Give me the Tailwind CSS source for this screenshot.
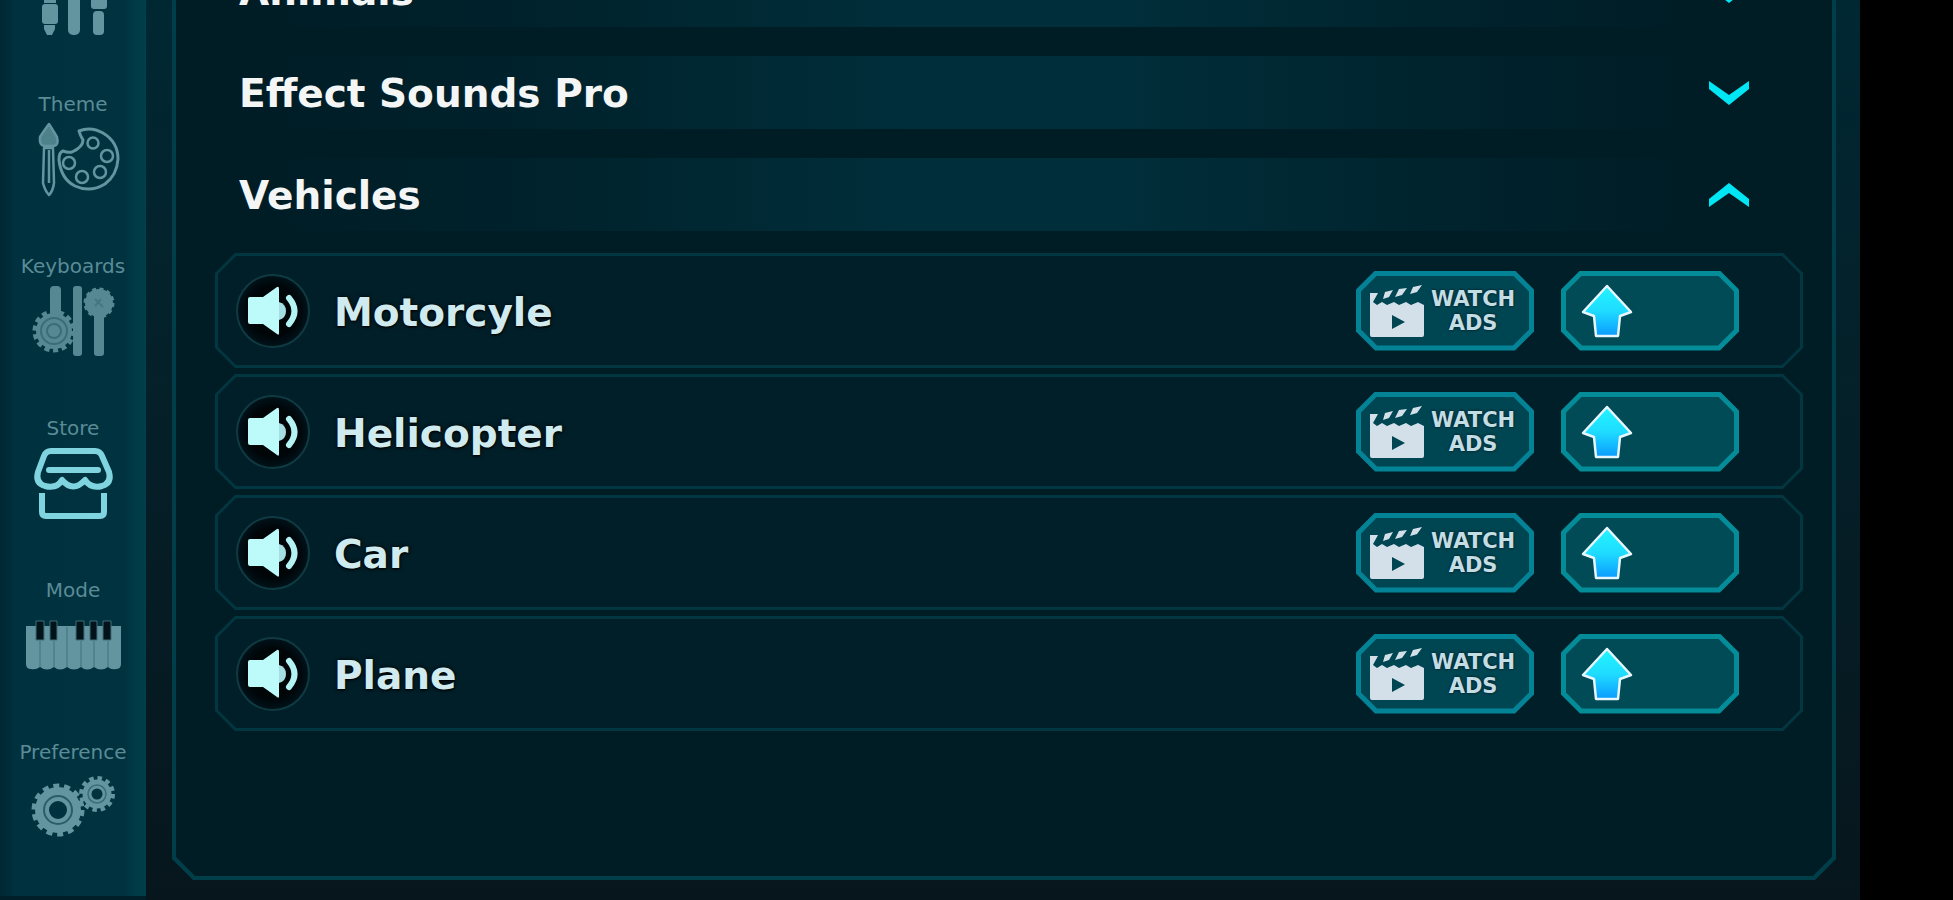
<!DOCTYPE html>
<html lang="en">
<head>
  <meta charset="UTF-8" />
  <meta name="viewport" content="width=device-width, initial-scale=1.0"/>
  <title>Sound Store</title>
  <script src="https://cdn.jsdelivr.net/npm/@tailwindcss/browser@4"></script>
</head>
<body class="bg-black min-h-screen flex pr-[93px] font-['DejaVu_Sans',sans-serif]">

  <!-- Shared icons -->
  <svg class="absolute size-0" xmlns="http://www.w3.org/2000/svg" aria-hidden="true">
    <defs>
      <linearGradient id="arrowFill" x1="0" y1="0" x2="0" y2="1">
        <stop offset="0" stop-color="#22f4ff"/>
        <stop offset="0.5" stop-color="#1fdcff"/>
        <stop offset="1" stop-color="#0a9bff"/>
      </linearGradient>
    </defs>
    <symbol id="speaker" viewBox="0 0 50 50">
      <path d="M2 11H15L29 1Q31 0 31 3V47Q31 50 29 48L15 38H2Q0 38 0 36V13Q0 11 2 11Z" fill="#bdfbfb"/>
      <path d="M31 16Q38 18 38 25Q38 32 31 34Z" fill="#a5dfe2"/>
      <path d="M41 12Q52 25 41 38" fill="none" stroke="#b4f3f4" stroke-width="6" stroke-linecap="round"/>
    </symbol>
    <symbol id="clapper" viewBox="0 0 54 52">
      <path fill="#d3e0ea" fill-rule="evenodd" d="M0 8L8 8L3 17L7 20L12 17L17 20L24 17L29 20L36 17L41 20L48 17L54 20V50Q54 52 52 52H2Q0 52 0 50ZM22 30V44L35 37Z"/>
      <path fill="#d3e0ea" d="M15 7L23 5L19 12L13 14ZM29 4L37 3L32 10L25 12ZM43 2L52 0L47 7L40 9Z"/>
    </symbol>
    <symbol id="arrow" viewBox="0 0 52 54">
      <path d="M26 2L50 28L39 32L37 52H15L13 32L2 28Z" fill="url(#arrowFill)" stroke="#e6f6ff" stroke-width="2.5" stroke-linejoin="round"/>
    </symbol>
    <symbol id="chevron" viewBox="0 0 40 24">
      <path d="M0 0L20 14L40 0V8L20 24L0 8Z" fill="#00e6f5"/>
    </symbol>
  </svg>

  <!-- Sidebar -->
  <nav class="w-[146px] shrink-0 flex flex-col items-center gap-[56px] border-b-4 border-[#001f29] bg-[linear-gradient(90deg,#002733_0,#002c38_9px,#00313e_14px,#00323f_125px,#003945_132px,#003f4b_100%)] text-xl leading-6 text-[#5b8b96]">
    <a href="#" aria-label="Mixer">
      <svg class="block w-[100px] h-9" viewBox="0 0 100 36" fill="#62959f">
        <rect x="21" y="0" width="12" height="3"/>
        <rect x="19" y="4" width="16" height="20" rx="3"/>
        <path d="M21 25H32V29L29 35H24L21 29Z"/>
        <rect x="45" y="-6" width="12" height="41" rx="5"/>
        <rect x="68" y="-6" width="16" height="15" rx="3"/>
        <rect x="70" y="11" width="11" height="24" rx="4"/>
      </svg>
    </a>
    <a href="#" class="flex flex-col items-center gap-[5px]">
      <span>Theme</span>
      <svg class="w-[100px] h-[77px]" viewBox="0 0 100 77" fill="none" stroke="#62959f" stroke-width="2.5" stroke-linejoin="round">
        <path d="M26 3Q20 11 17 16Q16 24 21 25H31Q36 24 34 16Q31 11 26 3Z" fill="#4d818c"/>
        <path d="M21 27L20 62Q22 70 26 74Q30 70 31 62L30 27ZM26 29V62" stroke-width="2.5"/>
        <path d="M56 10Q68 5 80 12Q95 21 95 38Q94 54 82 63Q67 72 52 65Q38 58 36 39Q36 31 40 30Q45 32 49 31Q60 26 60 19Q57 14 56 10Z" stroke-width="3"/>
        <circle cx="70" cy="22" r="5.5"/>
        <circle cx="84" cy="35" r="6"/>
        <circle cx="77" cy="51" r="6"/>
        <circle cx="59" cy="56" r="6"/>
        <circle cx="46" cy="42" r="6"/>
      </svg>
    </a>
    <a href="#" class="flex flex-col items-center gap-[5px]">
      <span>Keyboards</span>
      <svg class="w-[100px] h-[77px]" viewBox="0 0 100 77" fill="#568893">
        <rect x="27" y="3" width="11" height="30" rx="4"/>
        <rect x="50" y="3" width="9" height="70" rx="3"/>
        <rect x="71" y="20" width="10" height="53" rx="3"/>
        <circle cx="76" cy="20" r="14"/>
        <circle cx="76" cy="20" r="14" fill="none" stroke="#568893" stroke-width="3" stroke-dasharray="4 3.33"/>
        <circle cx="31" cy="48" r="18"/>
        <circle cx="31" cy="48" r="19" fill="none" stroke="#568893" stroke-width="5" stroke-dasharray="5 3.53"/>
        <circle cx="31" cy="48" r="13" fill="none" stroke="#3c6c78" stroke-width="2"/>
        <circle cx="31" cy="48" r="7" fill="none" stroke="#3c6c78" stroke-width="2"/>
        <path d="M72 16L80 24M72 23L78 16" stroke="#467682" stroke-width="2"/>
      </svg>
    </a>
    <a href="#" class="flex flex-col items-center gap-[5px]" aria-current="page">
      <span>Store</span>
      <svg class="w-[100px] h-[77px]" viewBox="0 0 100 77" fill="none" stroke="#80d4df" stroke-width="6" stroke-linejoin="round">
        <path d="M28 6H72Q77 6 79 11L86 27Q89 38 79 41Q68 44 62 35Q50 48 39 35Q34 44 22 41Q12 38 15 27L21 11Q23 6 28 6Z"/>
        <path d="M26 25H75" stroke-linecap="round"/>
        <path d="M19 48V67Q19 71 23 71H77Q81 71 81 67V48"/>
      </svg>
    </a>
    <a href="#" class="flex flex-col items-center gap-[5px]">
      <span>Mode</span>
      <svg class="w-[100px] h-[77px]" viewBox="0 0 100 77">
        <path d="M3 19H98V57Q98 62 93 62Q88 63 85 60Q78 65 71 60Q64 65 58 60Q51 65 44 60Q37 65 31 60Q24 65 17 60Q13 63 8 62Q3 62 3 57Z" fill="#62959f"/>
        <path d="M17 34V60M31 34V60M44 20V60M58 34V60M71 34V60M85 34V60" stroke="#4b7d88" stroke-width="1.5"/>
        <path d="M13 14H21V33H13ZM27 14H34V33H27ZM53 14H61V33H53ZM67 14H74V33H67ZM80 14H88V33H80Z" fill="#03131a" stroke="#3e6f7a" stroke-width="1"/>
      </svg>
    </a>
    <a href="#" class="flex flex-col items-center gap-[5px]">
      <span>Preference</span>
      <svg class="w-[100px] h-[77px]" viewBox="0 0 100 77" fill="none" stroke="#62959f">
        <circle cx="35" cy="41" r="16" stroke-width="14"/>
        <circle cx="35" cy="41" r="24" stroke-width="5" stroke-dasharray="6 4.77"/>
        <circle cx="35" cy="41" r="14" stroke="#2b5d69" stroke-width="2"/>
        <circle cx="74" cy="25" r="10" stroke-width="9"/>
        <circle cx="74" cy="25" r="16" stroke-width="4" stroke-dasharray="4.5 3.88"/>
        <circle cx="74" cy="25" r="9" stroke="#3c6d79" stroke-width="1.5"/>
      </svg>
    </a>
  </nav>

  <!-- Store panel -->
  <main class="flex-1 flex flex-col pl-[26px] pr-6 pb-5 bg-linear-to-b from-[#002833] to-[#07161d]">
    <div class="flex-1 flex flex-col px-1 pb-1 bg-[#003e4a] [clip-path:polygon(0_0,100%_0,100%_calc(100%_-_21px),calc(100%_-_21px)_100%,21px_100%,0_calc(100%_-_21px))]">
      <div class="flex-1 pl-[39px] pr-[29px] bg-[#001c25] [clip-path:polygon(0_0,100%_0,100%_calc(100%_-_19px),calc(100%_-_19px)_100%,19px_100%,0_calc(100%_-_19px))]">

        <div class="flex flex-col gap-[29px] text-[39px] font-bold text-[#f4f6f6] [text-shadow:0_0_4px_#000,0_1px_2px_#000]">
          <div class="h-[27px] flex flex-col justify-end overflow-hidden">
            <button class="h-[73px] shrink-0 flex items-center justify-between pl-6 pr-[54px] bg-[linear-gradient(90deg,#001c25_0,#00222c_20%,#002f3b_45%,#002f3b_55%,#00222c_80%,#001c25_95%)]">
              <span class="pt-1">Animals</span>
              <svg class="w-10 h-6"><use href="#chevron"/></svg>
            </button>
          </div>
          <button class="h-[73px] flex items-center justify-between pl-6 pr-[54px] bg-[linear-gradient(90deg,#001c25_0,#00222c_20%,#002f3b_45%,#002f3b_55%,#00222c_80%,#001c25_95%)]">
            <span class="pt-1">Effect Sounds Pro</span>
            <svg class="w-10 h-6"><use href="#chevron"/></svg>
          </button>
          <button class="h-[73px] flex items-center justify-between pl-6 pr-[54px] bg-[linear-gradient(90deg,#001c25_0,#00222c_20%,#002f3b_45%,#002f3b_55%,#00222c_80%,#001c25_95%)]" aria-expanded="true">
            <span class="pt-1">Vehicles</span>
            <svg class="w-10 h-6 rotate-180"><use href="#chevron"/></svg>
          </button>
        </div>

        <ul id="sounds" class="mt-[22px] flex flex-col gap-1.5"></ul>

      </div>
    </div>
  </main>

  <script>
    const sounds = ["Motorcyle", "Helicopter", "Car", "Plane"];

    document.getElementById("sounds").innerHTML = sounds.map(name => `
      <li class="p-[3px] bg-[#023641] [clip-path:polygon(20px_0,calc(100%_-_20px)_0,100%_20px,100%_calc(100%_-_20px),calc(100%_-_20px)_100%,20px_100%,0_calc(100%_-_20px),0_20px)]">
        <div class="h-[109px] flex items-center pl-[18px] pr-[61px] bg-[#011f29] [clip-path:polygon(18px_0,calc(100%_-_18px)_0,100%_18px,100%_calc(100%_-_18px),calc(100%_-_18px)_100%,18px_100%,0_calc(100%_-_18px),0_18px)]">
          <button class="size-[74px] shrink-0 flex items-center justify-center rounded-full border-2 border-[#0f3a42] bg-[radial-gradient(circle,#000508_50%,#00131a_72%)]" aria-label="Play ${name}">
            <svg class="size-[50px]"><use href="#speaker"/></svg>
          </button>
          <span class="flex-1 pt-1 pl-6 text-[39px] leading-none font-bold text-[#cfebef] [text-shadow:0_0_4px_#000,0_1px_2px_#000]">${name}</span>
          <button class="w-[178px] h-20 p-[5px] bg-[#048396] [clip-path:polygon(19px_0,calc(100%_-_19px)_0,100%_19px,100%_calc(100%_-_19px),calc(100%_-_19px)_100%,19px_100%,0_calc(100%_-_19px),0_19px)]">
            <span class="h-full flex items-center gap-[7px] pl-[9px] bg-[#004652] [clip-path:polygon(16px_0,calc(100%_-_16px)_0,100%_16px,100%_calc(100%_-_16px),calc(100%_-_16px)_100%,16px_100%,0_calc(100%_-_16px),0_16px)]">
              <svg class="w-[54px] h-[52px] shrink-0"><use href="#clapper"/></svg>
              <span class="text-[21px] leading-6 font-bold text-[#c3dde5] [text-shadow:0_0_3px_#00131a]">WATCH<br>ADS</span>
            </span>
          </button>
          <button class="ml-[27px] w-[178px] h-20 p-[5px] bg-[#048c98] [clip-path:polygon(19px_0,calc(100%_-_19px)_0,100%_19px,100%_calc(100%_-_19px),calc(100%_-_19px)_100%,19px_100%,0_calc(100%_-_19px),0_19px)]" aria-label="Upgrade ${name}">
            <span class="h-full flex items-center pl-[15px] bg-[#004b55] [clip-path:polygon(16px_0,calc(100%_-_16px)_0,100%_16px,100%_calc(100%_-_16px),calc(100%_-_16px)_100%,16px_100%,0_calc(100%_-_16px),0_16px)]">
              <svg class="w-[52px] h-[54px]"><use href="#arrow"/></svg>
            </span>
          </button>
        </div>
      </li>`).join("");
  </script>
</body>
</html>
